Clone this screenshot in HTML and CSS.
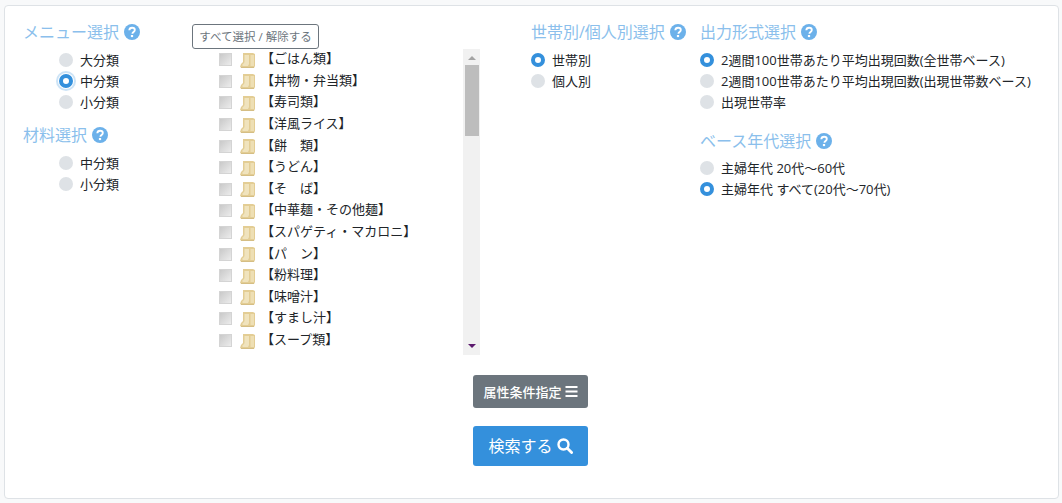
FILE: index.html
```html
<!DOCTYPE html>
<html lang="ja">
<head>
<meta charset="utf-8">
<title>検索</title>
<link rel="stylesheet" href="styles.css">
</head>
<body>
<svg class="defs" width="0" height="0">
  <symbol id="q" viewBox="0 0 16 16"><circle cx="8" cy="8" r="8" fill="#6cb1ea"/><path d="M5.300 6.200C5.400 4.700 6.500 3.700 8.100 3.700c1.600 0 2.700 1 2.700 2.300 0 1-.6 1.600-1.400 2.100-.7.400-.9.700-.9 1.300v.3" fill="none" stroke="#fff" stroke-width="1.900"/><rect x="6.900" y="11" width="2.200" height="2.100" fill="#fff"/></symbol>
  <symbol id="folder" viewBox="0 0 16 16"><path d="M3 1h10l2 1v12l-1 2H2L0 15l1-3 2-2z" fill="#e3cd94"/><path d="M4.500 3H9v9l-1 2H3l-1-1 2-2 .5-1z" fill="#f0e3bd"/><path d="M10.500 3H14v11h-3.500z" fill="#eedfb4"/><path d="M1 15.500h13" stroke="#d5be84" stroke-width="1"/></symbol>
</svg>
<main class="card">
  <div class="columns">
    <section class="col-menu">
      <h3 class="title">メニュー選択 <svg class="help"><use href="#q"/></svg></h3>
      <ul class="radios">
        <li class="radio"><i class="dot"></i>大分類</li>
        <li class="radio"><i class="dot on focus"></i>中分類</li>
        <li class="radio"><i class="dot"></i>小分類</li>
      </ul>
      <h3 class="title title-next">材料選択 <svg class="help"><use href="#q"/></svg></h3>
      <ul class="radios">
        <li class="radio"><i class="dot"></i>中分類</li>
        <li class="radio"><i class="dot"></i>小分類</li>
      </ul>
    </section>
    <section class="col-tree">
      <button class="select-all">すべて選択 / 解除する</button>
      <div class="tree">
        <ul class="tree-list">
          <li class="node"><i class="check"></i><svg class="folder"><use href="#folder"/></svg><span>【ごはん類】</span></li>
          <li class="node"><i class="check"></i><svg class="folder"><use href="#folder"/></svg><span>【丼物・弁当類】</span></li>
          <li class="node"><i class="check"></i><svg class="folder"><use href="#folder"/></svg><span>【寿司類】</span></li>
          <li class="node"><i class="check"></i><svg class="folder"><use href="#folder"/></svg><span>【洋風ライス】</span></li>
          <li class="node"><i class="check"></i><svg class="folder"><use href="#folder"/></svg><span>【餅　類】</span></li>
          <li class="node"><i class="check"></i><svg class="folder"><use href="#folder"/></svg><span>【うどん】</span></li>
          <li class="node"><i class="check"></i><svg class="folder"><use href="#folder"/></svg><span>【そ　ば】</span></li>
          <li class="node"><i class="check"></i><svg class="folder"><use href="#folder"/></svg><span>【中華麺・その他麺】</span></li>
          <li class="node"><i class="check"></i><svg class="folder"><use href="#folder"/></svg><span>【スパゲティ・マカロニ】</span></li>
          <li class="node"><i class="check"></i><svg class="folder"><use href="#folder"/></svg><span>【パ　ン】</span></li>
          <li class="node"><i class="check"></i><svg class="folder"><use href="#folder"/></svg><span>【粉料理】</span></li>
          <li class="node"><i class="check"></i><svg class="folder"><use href="#folder"/></svg><span>【味噌汁】</span></li>
          <li class="node"><i class="check"></i><svg class="folder"><use href="#folder"/></svg><span>【すまし汁】</span></li>
          <li class="node"><i class="check"></i><svg class="folder"><use href="#folder"/></svg><span>【スープ類】</span></li>
        </ul>
        <div class="scrollbar">
          <i class="arrow-up"></i>
          <i class="thumb"></i>
          <i class="arrow-down"></i>
        </div>
      </div>
    </section>
    <section class="col-unit">
      <h3 class="title">世帯別/個人別選択 <svg class="help"><use href="#q"/></svg></h3>
      <ul class="radios radios-flush">
        <li class="radio"><i class="dot on"></i>世帯別</li>
        <li class="radio"><i class="dot"></i>個人別</li>
      </ul>
    </section>
    <section class="col-output">
      <h3 class="title">出力形式選択 <svg class="help"><use href="#q"/></svg></h3>
      <ul class="radios radios-flush">
        <li class="radio"><i class="dot on"></i>2週間100世帯あたり平均出現回数(全世帯ベース)</li>
        <li class="radio"><i class="dot"></i>2週間100世帯あたり平均出現回数(出現世帯数ベース)</li>
        <li class="radio"><i class="dot"></i>出現世帯率</li>
      </ul>
      <h3 class="title title-base">ベース年代選択 <svg class="help"><use href="#q"/></svg></h3>
      <ul class="radios radios-flush radios-base">
        <li class="radio"><i class="dot"></i>主婦年代 20代～60代</li>
        <li class="radio"><i class="dot on"></i>主婦年代 すべて(20代～70代)</li>
      </ul>
    </section>
  </div>
  <div class="actions">
    <button class="btn-attr">属性条件指定
      <svg class="bars" viewBox="0 0 12 11"><path d="M0 0h12v2H0zM0 4.500h12v2H0zM0 9h12v2H0z" fill="#fff"/></svg>
    </button>
    <button class="btn-search">検索する
      <svg class="lens" viewBox="0 0 16 16"><circle cx="6.500" cy="6.500" r="5" fill="none" stroke="#fff" stroke-width="2.400"/><path d="M10.300 10.300l4.300 4.300" stroke="#fff" stroke-width="2.800" stroke-linecap="round"/></svg>
    </button>
  </div>
</main>
</body>
</html>
```

FILE: styles.css
```css
* { box-sizing: border-box; }
html, body { height: 100%; }
body {
  margin: 0;
  padding: 5px 3px 4px 4px;
  background: #f8f9fa;
  color: #212529;
  font-family: "Open Sans", "Noto Sans CJK JP", sans-serif;
  font-size: 13px;
  overflow: hidden;
}
.defs { position: absolute; }
ul { list-style: none; margin: 0; padding: 0; }
.card {
  height: 100%;
  background: #fff;
  border: 1px solid #dee2e6;
  border-radius: 4px;
  padding: 17px 0 0 18px;
}
.columns { display: flex; height: 332px; }
.col-menu { width: 169px; }
.col-tree { width: 339px; position: relative; padding-top: 26px; }
.col-unit { width: 169px; }
.col-output { flex: 1; }
.title {
  margin: 0;
  display: flex;
  align-items: center;
  height: 18px;
  font-size: 16px;
  font-weight: 400;
  line-height: 18px;
  color: #8bbfec;
  white-space: nowrap;
}
.help { width: 16px; height: 16px; margin-left: 5px; }
.title-next { margin-top: 14px; }
.title-base { margin-top: 20px; }
.radios { margin-top: 8px; padding-left: 36px; }
.radios-flush { padding-left: 0; }
.radios-base { margin-top: 7px; }
.radio {
  display: flex;
  align-items: center;
  height: 21px;
  padding-top: 1px;
  line-height: 21px;
  white-space: nowrap;
}
.dot {
  width: 14px;
  height: 14px;
  margin-right: 7px;
  border-radius: 50%;
  background: #dee2e6;
  flex: none;
}
.dot.on { background: #fff; border: 4px solid #3490dc; }
.dot.focus { box-shadow: 0 0 0 1px #fff, 0 0 0 3px rgba(52, 144, 220, .25); }
.select-all {
  position: absolute;
  left: 0;
  top: 1px;
  width: 127px;
  height: 25px;
  padding: 0;
  background: #fff;
  border: 1px solid #6c757d;
  border-radius: 3px;
  color: #6c757d;
  font: 11.500px/1 "Open Sans", "Noto Sans CJK JP", sans-serif;
  white-space: nowrap;
}
.tree { display: flex; height: 306px; overflow: hidden; }
.tree-list { width: 271px; padding: 0 0 0 27px; }
.node {
  display: flex;
  align-items: center;
  height: 21.600px;
  white-space: nowrap;
  font-size: 13px;
  line-height: 20px;
}
.node span { margin-top: -3px; margin-left: -1px; }
.check {
  width: 13px;
  height: 13px;
  margin-right: 8px;
  background: linear-gradient(135deg, #c9c9c9, #ececec);
  border: 1px solid #d4d4d4;
  flex: none;
}
.folder { width: 16px; height: 16px; margin-right: 6px; flex: none; }
.scrollbar {
  width: 17px;
  display: flex;
  flex-direction: column;
  align-items: center;
  background: #f1f1f1;
  flex: none;
}
.thumb { width: 14px; height: 71px; margin-top: 5px; background: #bdbdbd; }
.arrow-up, .arrow-down {
  width: 0;
  height: 0;
  border-left: 4px solid transparent;
  border-right: 4px solid transparent;
}
.arrow-up { margin-top: 7px; border-bottom: 4px solid #a3a3a3; }
.arrow-down { margin-top: auto; margin-bottom: 7px; border-top: 4px solid #5c1a6e; }
.actions {
  display: flex;
  flex-direction: column;
  align-items: center;
  gap: 18px;
  width: 115px;
  margin: 20px 0 0 450px;
}
.btn-attr, .btn-search {
  display: flex;
  align-items: center;
  justify-content: center;
  width: 115px;
  padding: 0;
  border: 0;
  border-radius: 3px;
  color: #fff;
  font-family: "Open Sans", "Noto Sans CJK JP", sans-serif;
}
.btn-attr { height: 33px; background: #6c757d; font-size: 13px; font-weight: 500; gap: 3px; padding-bottom: 1px; }
.btn-search { height: 40px; background: #3490dc; font-size: 16px; gap: 4px; padding-bottom: 3px; }
.bars { width: 13px; height: 11px; }
.lens { width: 16px; height: 16px; margin-top: 2px; }
```
